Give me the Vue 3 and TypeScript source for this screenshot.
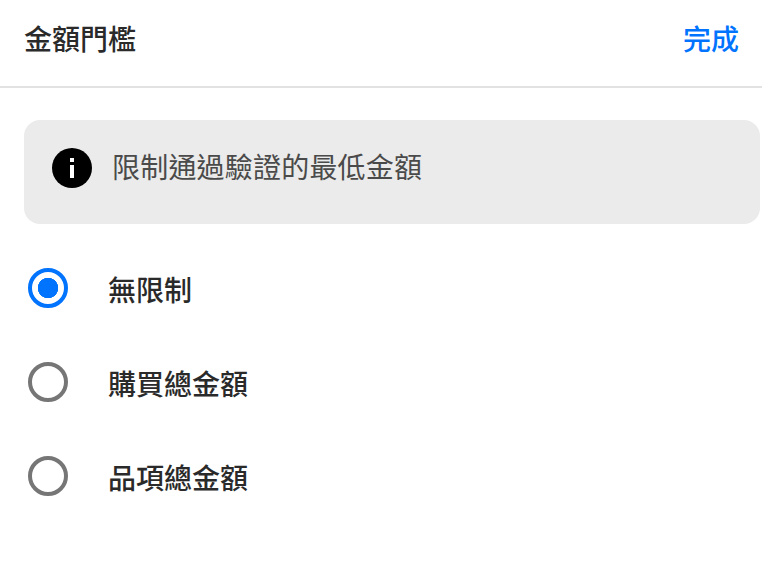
<script setup lang="ts">
interface Option {
  label: string;
  selected: boolean;
}
const options: Option[] = [
  { label: "無限制", selected: true },
  { label: "購買總金額", selected: false },
  { label: "品項總金額", selected: false },
];
</script>

<template>
  <div class="page">
    <header class="header">
      <span class="title">金額門檻</span>
      <span class="done">完成</span>
    </header>
    <section class="notice">
      <svg class="info" width="40" height="40" viewBox="0 0 40 40" aria-hidden="true">
        <circle cx="20" cy="20" r="20" fill="#000" />
        <rect x="18" y="10" width="4" height="4" fill="#fff" />
        <rect x="18" y="17" width="4" height="13" fill="#fff" />
      </svg>
      <span class="notice-text">限制通過驗證的最低金額</span>
    </section>
    <ul class="options">
      <li v-for="o in options" :key="o.label" class="option">
        <span class="radio" :class="{ on: o.selected }"></span>
        <span class="label">{{ o.label }}</span>
      </li>
    </ul>
  </div>
</template>

<style>
html, body { margin: 0; background: #fff; }
</style>

<style scoped>
.page {
  width: 762px;
  height: 568px;
  overflow: hidden;
  background: #fff;
  font-family: "Noto Sans CJK TC", "Noto Sans", sans-serif;
  font-size: 28px;
  line-height: 40px;
  font-weight: 500;
}
.header {
  box-sizing: border-box;
  height: 88px;
  border-bottom: 2px solid #e2e2e2;
  padding: 0 23px 10px 24px;
  display: flex;
  justify-content: space-between;
  align-items: center;
}
.title { color: #2a2a2a; }
.done { color: #0073ff; }
.notice {
  box-sizing: border-box;
  width: 736px;
  height: 104px;
  margin: 32px 0 0 24px;
  padding: 0 28px 8px;
  background: #ebebeb;
  border-radius: 16px;
  display: flex;
  align-items: center;
  gap: 20px;
}
.info { display: block; flex: none; }
.notice-text { color: #4a4a4a; font-weight: 400; letter-spacing: 0.2px; margin-top: -4px; }
.options {
  list-style: none;
  margin: 44px 0 0;
  padding: 0 0 0 28px;
  display: flex;
  flex-direction: column;
  gap: 54px;
}
.option {
  display: flex;
  align-items: center;
  height: 40px;
  gap: 40px;
}
.radio {
  box-sizing: border-box;
  width: 40px;
  height: 40px;
  flex: none;
  border-radius: 50%;
  border: 4px solid #767676;
  background: #fff;
}
.radio.on {
  border-color: #0073ff;
  background: radial-gradient(circle, #0073ff 0, #0073ff 10px, #fff 10.5px);
}
.label { color: #2a2a2a; position: relative; top: 1px; }
</style>
